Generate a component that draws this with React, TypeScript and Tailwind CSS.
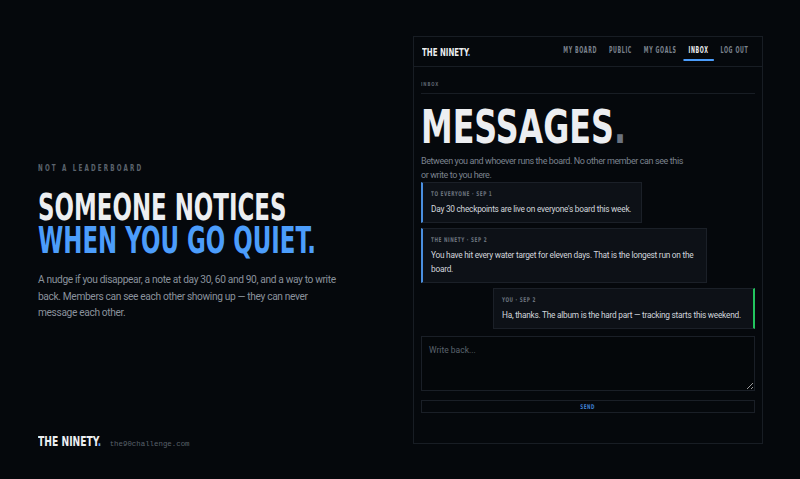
import React from "react";

const cond = { fontFamily: '"DejaVu Sans Condensed", "DejaVu Sans", sans-serif' } as React.CSSProperties;
const body = { fontFamily: 'Roboto, "Noto Sans", sans-serif' } as React.CSSProperties;

function Msg({ label, children, side, w }: { label: string; children: React.ReactNode; side: "left" | "right"; w: string }) {
  const cls =
    side === "left"
      ? "self-start border-l-2 border-l-[#4a8fe0] border-r"
      : "self-end border-r-2 border-r-[#22c55e] border-l";
  return (
    <div className={`${cls} ${w} bg-[#0d1117] border-y border-[#1b2028] pl-[8px] pr-[6px] pt-[7px] pb-[6px]`}>
      <div className="h-[8px] leading-[8px] text-[6.5px] font-bold tracking-[0.12em] text-[#6a727d] whitespace-nowrap scale-x-[0.72] origin-left" style={cond}>
        {label}
      </div>
      <div className="mt-[4px] text-[8.3px] leading-[14px] tracking-[-0.03em] text-[#d2d6dc] whitespace-nowrap" style={body}>
        {children}
      </div>
    </div>
  );
}

export default function App() {
  return (
    <div className="w-[800px] h-[479px] bg-[#05080c] flex overflow-hidden" style={body}>
      <div className="w-[413px] h-full flex flex-col pl-[38px]">
        <div className="pt-[164px] h-[10px] box-content leading-[10px] text-[8px] font-bold tracking-[0.35em] text-[#5b636d] whitespace-nowrap scale-x-[0.78] origin-left" style={cond}>
          NOT A LEADERBOARD
        </div>
        <h1 className="mt-[17px] text-[38px] leading-[33px] font-bold text-[#eceef1] whitespace-nowrap scale-x-[0.67] origin-left" style={cond}>
          SOMEONE NOTICES
          <br />
          <span className="text-[#4c9dfb]">WHEN YOU GO QUIET.</span>
        </h1>
        <p className="mt-[15px] text-[10.2px] leading-[16.5px] tracking-[-0.035em] text-[#8a929c] whitespace-nowrap">
          A nudge if you disappear, a note at day 30, 60 and 90, and a way to write
          <br />
          back. Members can see each other showing up — they can never
          <br />
          message each other.
        </p>
        <div className="mt-auto pb-[29px] flex items-baseline">
          <span className="text-[14px] leading-[18px] font-bold text-[#eceef1] whitespace-nowrap scale-x-[0.73] origin-left inline-block mr-[-23px]" style={cond}>
            THE NINETY<span className="text-[#4c9dfb]">.</span>
          </span>
          <span className="ml-[8px] text-[7.4px] text-[#59616b]" style={{ fontFamily: '"Liberation Mono", "DejaVu Sans Mono", monospace' }}>
            the90challenge.com
          </span>
        </div>
      </div>

      <div className="pt-[36px]">
        <div className="w-[350px] h-[408px] border border-[#181d24] flex flex-col">
          <div className="h-[30px] shrink-0 border-b border-[#181d24] flex items-center pl-[8px] pr-[14px] pb-[2px]">
            <div className="w-[49px] shrink-0">
              <span className="text-[11px] leading-[14px] font-bold text-[#eceef1] whitespace-nowrap scale-x-[0.71] origin-left inline-block" style={cond}>
                THE NINETY<span className="text-[#4c9dfb]">.</span>
              </span>
            </div>
            <div className="flex-1 min-w-0 flex justify-end">
              <nav className="shrink-0 flex items-center gap-[18px] text-[8px] leading-[10px] font-bold tracking-[0.12em] text-[#7b838e] whitespace-nowrap scale-x-[0.66] origin-right" style={cond}>
                <span>MY BOARD</span>
                <span>PUBLIC</span>
                <span>MY GOALS</span>
                <span className="relative text-[#eceef1]">
                  INBOX
                  <span className="absolute left-[-8px] right-[-8px] top-[13px] h-[2px] bg-[#4c9dfb]" />
                </span>
                <span>LOG OUT</span>
              </nav>
            </div>
          </div>

          <div className="px-[7px] flex flex-col">
            <div className="mt-[13px] h-[8px] leading-[8px] text-[5.5px] font-bold tracking-[0.2em] text-[#5b636d] whitespace-nowrap scale-x-[0.78] origin-left" style={cond}>
              INBOX
            </div>
            <div className="mt-[5px] h-px bg-[#181d24]" />
            <div className="mt-[13px] text-[46.5px] leading-[40px] font-bold text-[#eceef1] whitespace-nowrap scale-x-[0.76] origin-left" style={cond}>
              MESSAGES<span className="text-[#6b7380]">.</span>
            </div>
            <p className="mt-[7px] text-[9px] leading-[14px] tracking-[-0.045em] text-[#7b838e] whitespace-nowrap">
              Between you and whoever runs the board. No other member can see this
              <br />
              or write to you here.
            </p>
            <div className="flex flex-col gap-[5px]">
              <Msg label="TO EVERYONE · SEP 1" side="left" w="w-[221px]">
                Day 30 checkpoints are live on everyone's board this week.
              </Msg>
              <Msg label="THE NINETY · SEP 2" side="left" w="w-[286px]">
                You have hit every water target for eleven days. That is the longest run on the
                <br />
                board.
              </Msg>
              <Msg label="YOU · SEP 2" side="right" w="w-[262px]">
                Ha, thanks. The album is the hard part — tracking starts this weekend.
              </Msg>
            </div>
            <textarea
              placeholder="Write back..."
              className="mt-[7px] h-[55px] w-full block bg-[#04070a] border border-[#1a1f27] px-[7px] py-[7px] text-[8.5px] leading-[12px] text-[#d2d6dc] placeholder:text-[#5b636d] outline-none"
              style={body}
            />
            <button className="mt-[9px] h-[13px] w-full border border-[#1a1f27] flex items-center justify-center">
              <span className="text-[6.5px] leading-[8px] font-bold tracking-[0.12em] text-[#3f7fd0] scale-x-[0.7] inline-block" style={cond}>
                SEND
              </span>
            </button>
          </div>
        </div>
      </div>
    </div>
  );
}
